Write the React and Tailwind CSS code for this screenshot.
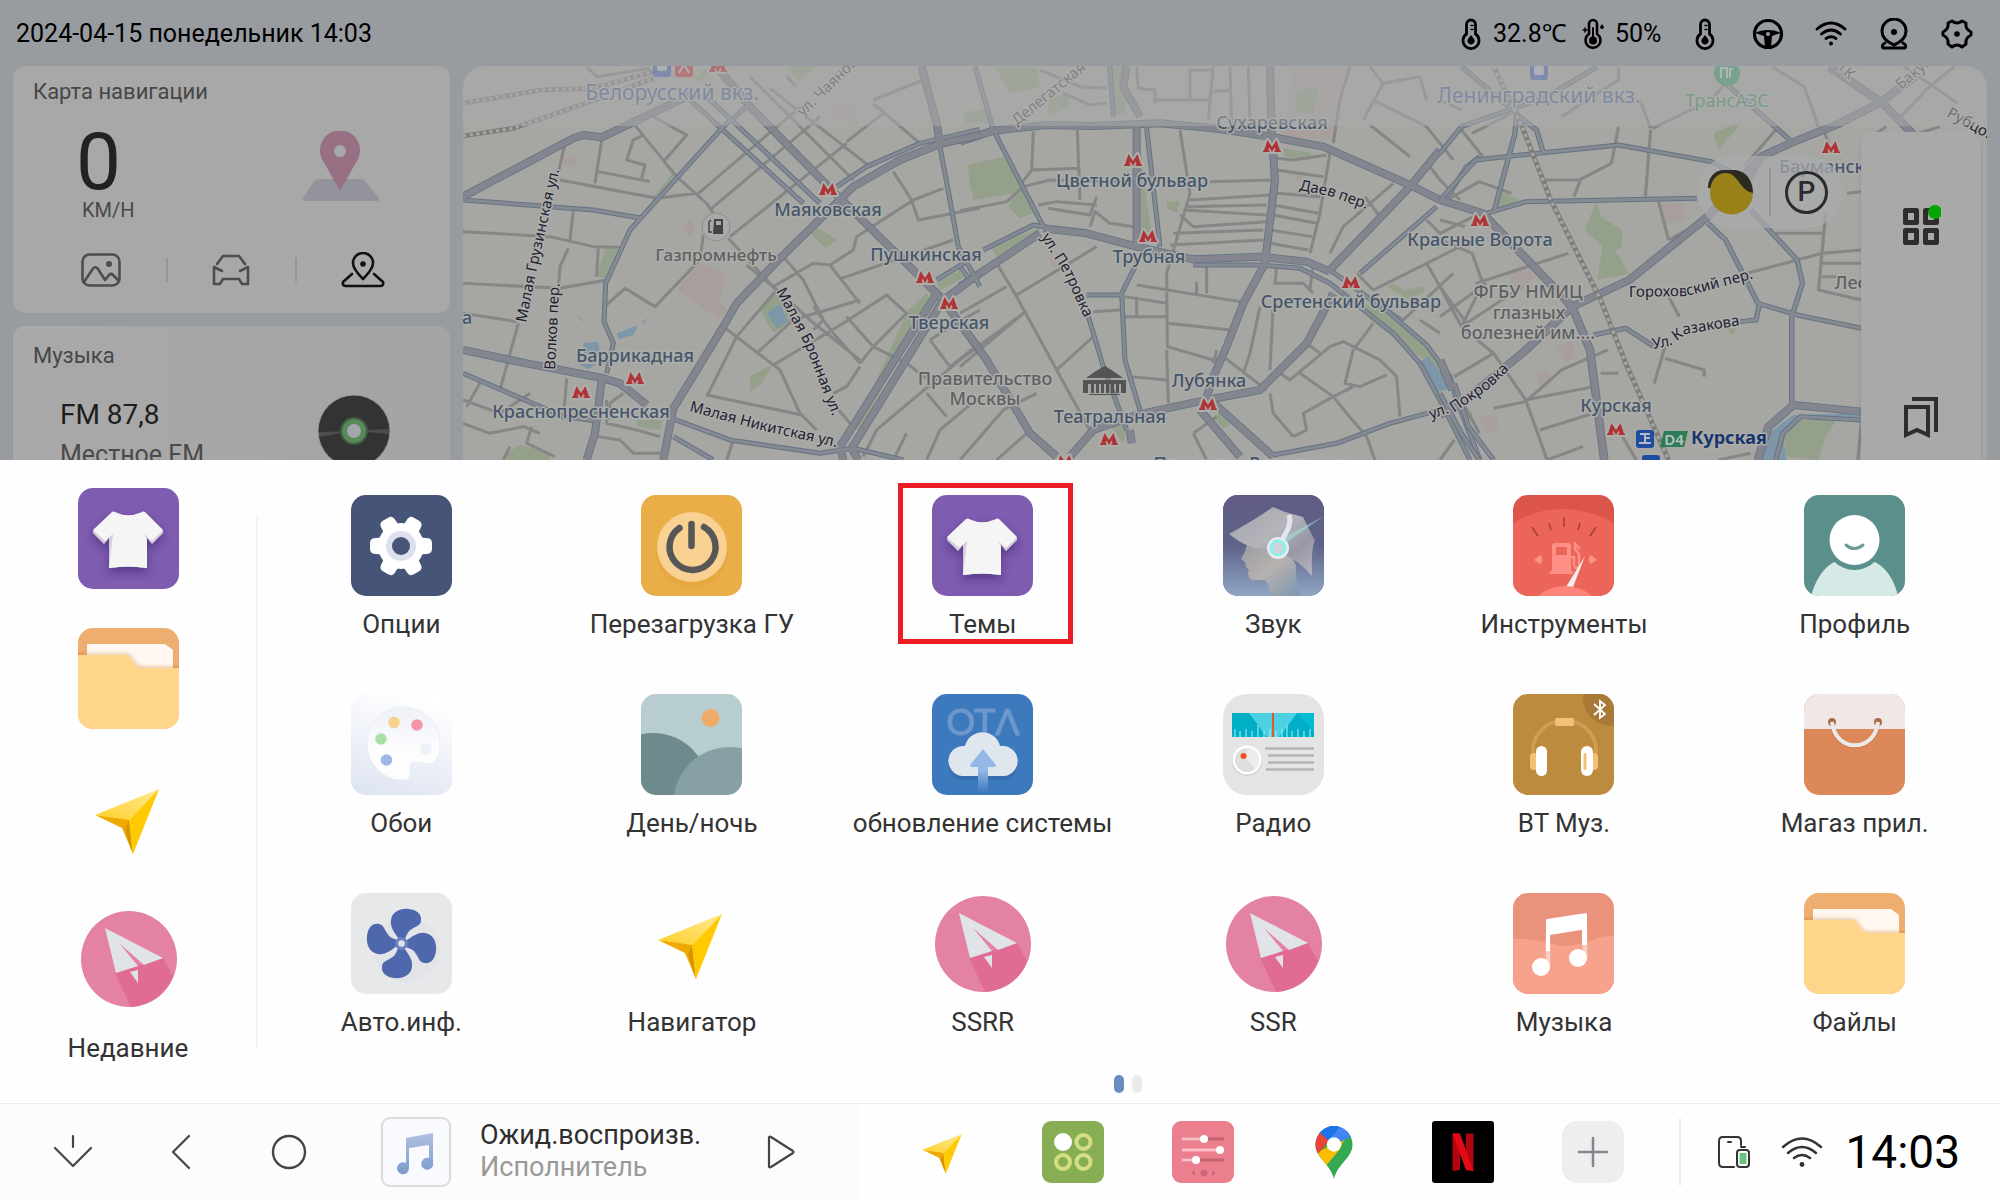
import { useId } from 'react';

/* ---------- app icons, all on a 101 x 101 canvas ---------- */

function Tile({ bg, rx = 15, children }) {
  const id = useId();
  return (
    <svg viewBox="0 0 101 101" className="block h-full w-full" aria-hidden="true">
      <clipPath id={id}>
        <rect width="101" height="101" rx={rx} />
      </clipPath>
      <g clipPath={`url(#${id})`}>
        <rect width="101" height="101" fill={bg} />
        {children}
      </g>
    </svg>
  );
}

function ShirtIcon() {
  const id = useId();
  return (
    <Tile bg="#7e5cb0">
      <filter id={id} x="-30%" y="-30%" width="160%" height="170%">
        <feDropShadow dx="0" dy="5" stdDeviation="5" floodColor="#3b2366" floodOpacity="0.55" />
      </filter>
      <g filter={`url(#${id})`}>
        <path d="M15 43 34 25 50 28 67 25 85 43 85 45 74 56 69 50V80Q50 77 31 80V50L26 56 15 45Z" fill="#d3cddd" />
        <path d="M34 24Q36 23 38 24.500Q50 30 63 24.500Q65 23 67 24L85 42 74 53 66 46 69 52V80Q50 77 31 80L35 46 27 53 15 42Z" fill="#f5f5f6" />
      </g>
    </Tile>
  );
}

function FolderIcon() {
  const id = useId();
  return (
    <Tile bg="#eeae70">
      <filter id={id} x="-10%" y="-30%" width="120%" height="150%">
        <feDropShadow dx="0" dy="-1" stdDeviation="2" floodColor="#b5641c" floodOpacity="0.4" />
      </filter>
      <path d="M9 17Q9 16 10 16H87L95 22V60H9Z" fill="#fff7f0" />
      <path d="M-5 27H49Q51 27 53 30L58 37Q60 40 63 40H106V106H-5Z" fill="#fed58a" filter={`url(#${id})`} />
    </Tile>
  );
}

function ArrowIcon() {
  const id = useId();
  return (
    <svg viewBox="0 0 101 101" className="block h-full w-full" aria-hidden="true">
      <linearGradient id={id} x1="0" y1="1" x2="1" y2="0">
        <stop offset="0" stopColor="#ffd028" />
        <stop offset="1" stopColor="#ffe995" />
      </linearGradient>
      <path d="M17 47 51 51 55 86 44 60Z" fill="#efa900" />
      <path d="M51 51 55 86 51 75 47 62Z" fill="#d99400" />
      <path d="M17 47 81 21 51 52Z" fill={`url(#${id})`} />
      <path d="M81 21 55 86 51 52Z" fill="#ffcb00" />
    </svg>
  );
}

function PlaneIcon() {
  return (
    <svg viewBox="0 0 101 101" className="block h-full w-full" aria-hidden="true">
      <circle cx="51" cy="51" r="48" fill="#e482a3" />
      <path d="M37 65 85 50 95 68A48 48 0 0 1 53 99Z" fill="#e06c93" />
      <path d="M27 20 85 50 66 57 41 35 60 58 38 65Z" fill="#e0e4e8" />
      <path d="M52 64 60 62V75Z" fill="#e0e4e8" />
    </svg>
  );
}

function GearIcon() {
  return (
    <Tile bg="#465478">
      <g fill="#fff">
        <circle cx="50" cy="51" r="23" />
        {[0, 60, 120, 180, 240, 300].map((a) => (
          <path key={a} d="M62 39Q68 43 75 43 81 43 81 48V54Q81 59 75 59 68 59 62 63Z" transform={`rotate(${a} 50 51)`} />
        ))}
      </g>
      <circle cx="50" cy="51" r="15" fill="#dce1ec" />
      <circle cx="50" cy="51" r="9" fill="#465478" />
    </Tile>
  );
}

function PowerIcon() {
  return (
    <Tile bg="#e9ae48">
      <circle cx="51" cy="57" r="36" fill="#e8a33c" opacity="0.6" />
      <circle cx="51" cy="52" r="35" fill="#f9d193" />
      <g fill="none" stroke="#575757" strokeWidth="6.500" strokeLinecap="round">
        <path d="M38.500 33A23 23 0 1 0 63 32" />
        <path d="M50.500 29V51" />
      </g>
    </Tile>
  );
}

function SoundIcon() {
  const id = useId();
  return (
    <Tile bg="#625d85">
      <linearGradient id={id} x1="0" y1="0" x2="0" y2="1">
        <stop offset="0" stopColor="#605b84" />
        <stop offset="0.5" stopColor="#5f6489" />
        <stop offset="1" stopColor="#8fa6c4" />
      </linearGradient>
      <linearGradient id={`${id}c`} x1="0" y1="0" x2="1" y2="1">
        <stop offset="0" stopColor="#a3a3ac" />
        <stop offset="0.45" stopColor="#b4b4bb" />
        <stop offset="0.7" stopColor="#9797a6" />
        <stop offset="1" stopColor="#b9b9c2" />
      </linearGradient>
      <linearGradient id={`${id}f`} x1="0" y1="0" x2="1" y2="1">
        <stop offset="0" stopColor="#9c9ca2" />
        <stop offset="0.5" stopColor="#b5b1ae" />
        <stop offset="1" stopColor="#7d96b4" />
      </linearGradient>
      <rect width="101" height="101" fill={`url(#${id})`} />
      <path d="M24 48 22 57 18 64 22 67 23 72 26 75 25 78Q25 86 34 85L42 85Q47 90 47 101H78Q72 90 73 70L62 50Z" fill={`url(#${id}f)`} />
      <path d="M6 39Q30 26 50 12L62 17 80 22 92 46Q88 52 89 81 76 66 62 60 50 55 37 54 22 52 6 39Z" fill={`url(#${id}c)`} />
      <path d="M58 44 101 21 60 50Z" fill="#9fe8e6" opacity="0.5" />
      <path d="M66 20Q68 26 65 34L58 47" fill="none" stroke="#e4e4ec" strokeWidth="5" />
      <circle cx="55" cy="53" r="11" fill="#e6ebf2" />
      <circle cx="55" cy="53" r="7" fill="#cfd3dd" stroke="#8ff0ea" strokeWidth="3" />
    </Tile>
  );
}

function GaugeIcon() {
  return (
    <Tile bg="#db5549">
      <circle cx="50" cy="110" r="96" fill="#eb6559" />
      <g stroke="#a93f37" strokeWidth="1.600">
        <path d="M51 22V32M36 28 38 35M67 28 65 35M19 32 25 41M83 32 77 41" />
      </g>
      <g fill="#ff9088">
        <path d="M21 65 27 60 29 62V67L27 69ZM84 65 78 60 76 62V67L78 69Z" />
        <path d="M39 51Q39 48 42 48H55Q58 48 58 51V76H60V79H37V76H39ZM43 52V60H54V52Z" fillRule="evenodd" />
      </g>
      <path d="M58 62H61V71Q63 75 66 71V59L62 54 62 49 67 54" fill="none" stroke="#ff9088" strokeWidth="2.500" />
      <path d="M72 61 53 92 60 92Z" fill="#f5eeee" />
      <circle cx="52" cy="132" r="41" fill="#ff857a" />
    </Tile>
  );
}

function ProfileIcon() {
  return (
    <Tile bg="#5a8f8c">
      <path d="M7 101Q14 76 30 67H71Q88 76 94 101Z" fill="#d5e9e7" />
      <circle cx="50.500" cy="46" r="29" fill="#5a8f8c" />
      <circle cx="50.500" cy="45" r="25" fill="#fff" />
      <path d="M42 50Q50 57 59 50" fill="none" stroke="#6b9a97" strokeWidth="3" strokeLinecap="round" />
    </Tile>
  );
}

function PaletteIcon() {
  const id = useId();
  return (
    <Tile bg="#eef1f9">
      <linearGradient id={id} x1="0.6" y1="0" x2="0.3" y2="1">
        <stop offset="0" stopColor="#ffffff" />
        <stop offset="1" stopColor="#dfe5f2" />
      </linearGradient>
      <linearGradient id={`${id}p`} x1="0" y1="0" x2="0" y2="1">
        <stop offset="0" stopColor="#eff1f8" />
        <stop offset="0.6" stopColor="#fdfdfe" />
      </linearGradient>
      <rect width="101" height="101" fill={`url(#${id})`} />
      <path
        d="M52 13C74 13 89 30 89 50 89 60 86 66 82 69 76 71 70 68 63 68 59 68 59 71 59 75V80C59 84 57 86 51 86 31 86 16 69 16 49 16 29 32 13 52 13Z"
        fill={`url(#${id}p)`}
        stroke="#e6eaf3"
        strokeWidth="0.600"
      />
      <circle cx="43" cy="28.500" r="5.800" fill="#f5d28b" />
      <circle cx="66" cy="31" r="5.800" fill="#f794a8" />
      <circle cx="30" cy="45" r="5.800" fill="#abe0a5" />
      <circle cx="35.500" cy="66" r="5.800" fill="#9fb8e8" />
      <circle cx="75" cy="55" r="5.800" fill="#eef1f9" />
    </Tile>
  );
}

function DayNightIcon() {
  return (
    <Tile bg="#b7cdd0">
      <circle cx="69.500" cy="24" r="9" fill="#f0ab68" />
      <circle cx="12" cy="95" r="56" fill="#6e8a8c" />
      <circle cx="89" cy="110" r="57" fill="#86a0a4" />
    </Tile>
  );
}

function OtaIcon() {
  const id = useId();
  return (
    <Tile bg="#3d79bd">
      <linearGradient id={id} x1="0" y1="0" x2="0" y2="1">
        <stop offset="0.5" stopColor="#93b8e7" />
        <stop offset="1" stopColor="#3d79bd" />
      </linearGradient>
      <text x="51" y="41" textAnchor="middle" fontFamily="Lato, sans-serif" fontSize="36" fill="#6e97cc" stroke="#6e97cc">OTΛ</text>
      <path d="M30 82A15 15 0 1 1 33 52A18 18 0 0 1 68 52A15 15 0 1 1 73 82Z" fill="#2d5e98" opacity="0.35" transform="translate(0 4)" />
      <path d="M30 82A15 15 0 1 1 33 52A18 18 0 0 1 68 52A15 15 0 1 1 73 82Z" fill="#dfe6ee" />
      <path d="M51 55 64 71Q64 73 62 73H56V98H46V73H40Q38 73 38 71Z" fill={`url(#${id})`} />
    </Tile>
  );
}

function RadioIcon() {
  return (
    <Tile bg="#e4e4e4" rx={24}>
      <rect x="9" y="19" width="82" height="24" fill="#00bcd4" />
      <path d="M9 19H45L30 43H9ZM9 38 26 19 42 43H9ZM58 43 74 19 91 38V43Z" fill="#00a9c0" opacity="0.7" />
      <path d="M26 19H74L56 43H44Z" fill="#4dd0e1" />
      <path d="M12 35V43M17 37V43M23 35V43M29 37V43M35 31V43M41 37V43M47 35V43M53 37V43M59 35V43M64 31V43M69 37V43M75 35V43M81 37V43M87 35V43" stroke="#b2ebf2" />
      <rect x="49" y="19" width="2" height="24" fill="#e8562a" />
      <circle cx="24" cy="67" r="15" fill="#cfcfcf" />
      <circle cx="24" cy="66" r="14.500" fill="#fff" />
      <circle cx="24" cy="66" r="12" fill="#dedede" />
      <path d="M24 66 32 75A12 12 0 0 0 24 54Z" fill="#ececec" />
      <circle cx="20.500" cy="62" r="3" fill="#f4511e" />
      <path d="M42 54.500H91M45 61.500H91M45 68.500H91M43 75.500H91" stroke="#b4b4b4" strokeWidth="2.600" />
    </Tile>
  );
}

function BluetoothIcon() {
  return (
    <Tile bg="#bd8b3e">
      <circle cx="98" cy="4" r="28" fill="#a97a37" />
      <path d="M81 10 92 20 87 24V7L92 11 81 21" fill="none" stroke="#fff" strokeWidth="1.800" />
      <path d="M20 61V56A31 29 0 0 1 83 56V61" fill="none" stroke="#d19d52" strokeWidth="3.600" />
      <rect x="42" y="24" width="19" height="8" rx="1.500" fill="#f4bf77" />
      <rect x="17" y="59" width="12" height="17" rx="4" fill="#f4bf77" />
      <rect x="74" y="59" width="11" height="17" rx="4" fill="#f4bf77" />
      <rect x="23" y="52" width="11" height="30" rx="5.500" fill="#fff" />
      <rect x="68" y="52" width="12" height="30" rx="6" fill="#fff" />
      <rect x="70.500" y="59" width="3" height="17" rx="1.500" fill="#f4bf77" />
    </Tile>
  );
}

function ShopIcon() {
  return (
    <Tile bg="#dc8858">
      <rect width="101" height="35" fill="#efe8e4" />
      <circle cx="28" cy="28" r="4" fill="#b06a48" />
      <circle cx="74" cy="28" r="4" fill="#b06a48" />
      <path d="M28 30C31 60 71 60 74 30" fill="none" stroke="#b9683d" strokeWidth="4" opacity="0.4" />
      <path d="M28 28C31 59 71 59 74 28" fill="none" stroke="#eae9ec" strokeWidth="4" />
    </Tile>
  );
}

function FanIcon() {
  return (
    <Tile bg="#e7e8ea">
      <ellipse cx="56" cy="57" rx="33" ry="32" fill="#dfe0e3" opacity="0.5" />
      {[0, 90, 180, 270].map((a) => (
        <path
          key={a}
          d="M48 46C42 38 39 33 40 27 41 19 49 15 58 16 66 17 71 21 70 28 69 33 65 33 61 36 57 38 56 41 54 46Z"
          fill="#4f67ac"
          transform={`rotate(${a} 50.500 50.500)`}
        />
      ))}
      <circle cx="50.500" cy="50.500" r="6.500" fill="#6c80c0" />
      <circle cx="50.500" cy="50.500" r="3.300" fill="#dfe3ee" />
    </Tile>
  );
}

function MusicIcon() {
  return (
    <Tile bg="#eb927c">
      <path d="M0 46C22 44 34 52 54 53 74 52 80 43 101 43V101H0Z" fill="#f7a28c" />
      <path d="M35 40V74M72 34V65" stroke="#fbd0c4" strokeWidth="4.500" />
      <path d="M33 27Q33 26 34 26L73 20 74 21V36L37 42V58H33ZM69 36H74V52H69Z" fill="#fff" />
      <circle cx="28" cy="74" r="9" fill="#fff" />
      <circle cx="65" cy="65" r="9" fill="#fff" />
    </Tile>
  );
}

/* ---------- dock icons, 62 x 62 canvas ---------- */

function CirclesIcon() {
  return (
    <svg viewBox="0 0 62 62" className="block h-full w-full" aria-hidden="true">
      <rect width="62" height="62" rx="9" fill="#88ae55" />
      <circle cx="21" cy="21" r="9" fill="#fff" />
      <g fill="none" stroke="#d3df81" strokeWidth="4">
        <circle cx="41.500" cy="21" r="7" />
        <circle cx="21" cy="41" r="7" />
        <circle cx="41.500" cy="41" r="7" />
      </g>
    </svg>
  );
}

function SlidersIcon() {
  return (
    <svg viewBox="0 0 62 62" className="block h-full w-full" aria-hidden="true">
      <rect width="62" height="62" rx="9" fill="#eb7f8d" />
      <path d="M10 18H52M10 39H52" stroke="#c56471" strokeWidth="3" />
      <path d="M10 18H32M10 29H48M10 39H24" stroke="#fbbfca" strokeWidth="3" />
      <g fill="#fff">
        <circle cx="32" cy="18" r="4" />
        <circle cx="48" cy="29" r="4" />
        <circle cx="24" cy="39" r="4" />
      </g>
      <g fill="#cb6875">
        <circle cx="32" cy="52" r="3.500" />
        <path d="M23 49V55L19 52ZM40 49V55L44 52Z" />
      </g>
    </svg>
  );
}

function MapsPinIcon() {
  const id = useId();
  return (
    <svg viewBox="0 0 62 62" className="block h-full w-full" aria-hidden="true">
      <clipPath id={id}>
        <path d="M32 5A18.500 18.500 0 0 1 50.500 23.500C50.500 37 36 42 32 58 28 42 13.500 37 13.500 23.500A18.500 18.500 0 0 1 32 5Z" />
      </clipPath>
      <g clipPath={`url(#${id})`}>
        <rect width="62" height="62" fill="#34a853" />
        <path d="M0 50 16 31 31 23 46 10 38 28 18 52Z" fill="#fbbc04" />
        <path d="M0 0H62V10L31 24 16 12Z" fill="#4285f4" />
        <path d="M10 0H37L37 7 26 20 16 12Z" fill="#1a73e8" />
        <path d="M0 16 17 11 27 20 15 34 0 40Z" fill="#ea4335" />
        <path d="M37 6 62 6 46 13 38 22Z" fill="#4285f4" />
      </g>
      <circle cx="32" cy="23.500" r="7.200" fill="#fff" />
    </svg>
  );
}

function NetflixIcon() {
  return (
    <svg viewBox="0 0 62 62" className="block h-full w-full" aria-hidden="true">
      <rect width="62" height="62" rx="3" fill="#000" />
      <path d="M20.500 12.500H28V49L20.500 50ZM34 12.500H41.500V50L34 49Z" fill="#b1060f" />
      <path d="M20.500 12.500H28L41.500 50 34 49Z" fill="#e50914" />
    </svg>
  );
}

function AddIcon() {
  return (
    <svg viewBox="0 0 62 62" className="block h-full w-full" aria-hidden="true">
      <rect width="62" height="62" rx="15" fill="#eee" />
      <path d="M31 17V45M17 31H45" stroke="#85858f" strokeWidth="2.500" strokeLinecap="round" />
    </svg>
  );
}

/* ---------- line icons ---------- */

function Line({ box = '0 0 32 32', w = 3, className, children }) {
  return (
    <svg viewBox={box} className={className} fill="none" stroke="currentColor" strokeWidth={w} strokeLinecap="round" strokeLinejoin="round" aria-hidden="true">
      {children}
    </svg>
  );
}

function ThermoIcon() {
  return (
    <Line w={2.8} className="h-8 w-8">
      <path d="M11.500 16V6.500A4.500 4.500 0 0 1 20.500 6.500V16A8 8 0 1 1 11.500 16Z" />
      <path d="M16 17 19 21A3.500 3.500 0 1 1 13 21Z" fill="currentColor" stroke="none" />
      <path d="M16 7.500H18M16 11.500H18" strokeWidth="1.500" />
    </Line>
  );
}

function HumidityIcon() {
  return (
    <Line w={2.6} className="h-8 w-8">
      <path d="M12 16V6A4 4 0 0 1 20 6V16A7.500 7.500 0 1 1 12 16Z" />
      <circle cx="16" cy="22.500" r="4" fill="currentColor" stroke="none" />
      <path d="M16 10V22" strokeWidth="2" />
      <path d="M25 6 27 9A2 2 0 1 1 23 9Z" fill="currentColor" stroke="none" />
      <path d="M8 10V14M6 12H10" strokeWidth="1.500" />
    </Line>
  );
}

function WheelIcon() {
  return (
    <Line w={3.2} className="h-8 w-8">
      <circle cx="16" cy="16" r="13.500" />
      <path d="M3 15C10 11 22 11 29 15L20 18 19 29H13L12 18Z" fill="currentColor" stroke="none" />
      <circle cx="16" cy="16" r="2" fill="#989ba0" stroke="none" />
    </Line>
  );
}

function WifiIcon() {
  return (
    <Line w={2.8} className="h-8 w-8">
      <path d="M2 11Q16 -1 30 11M6.500 16Q16 8 25.500 16M11 20.500Q16 17 21 20.500" />
      <circle cx="16" cy="25.500" r="2" fill="currentColor" stroke="none" />
    </Line>
  );
}

function PlaceIcon() {
  return (
    <Line w={3} className="h-8 w-8">
      <path d="M16 27C9 24 4 19 4 13A12 12 0 0 1 28 13C28 19 23 24 16 27Z" />
      <circle cx="16" cy="14" r="3" fill="currentColor" stroke="none" />
      <path d="M7 25Q3 27 5 30H27Q29 27 25 25" />
    </Line>
  );
}

function HexGearIcon() {
  return (
    <Line w={3} className="h-8 w-8">
      <path d="M11 3Q16 7 21 3L25 5Q24 11 30 14V17Q24 20 25 26L21 29Q16 25 11 29L7 26Q8 20 2 17V14Q8 11 7 5Z" />
      <circle cx="16" cy="16" r="2.800" fill="currentColor" stroke="none" />
    </Line>
  );
}

/* ---------- map ---------- */

// Roads are stored per tile, in tile units (3 per pixel).
const WEST = {
  parks: 'M600 480 650 535 600 590 580 590 635 525ZM1050 695 1070 680 1130 720 1095 745ZM435 748 475 745 440 835 412 830ZM900 930 945 870 1000 960 940 1000ZM1200 540 1430 425 1420 440 1180 550ZM1525 500 1560 490V570L1530 560ZM870 1130 940 1090 905 1150 870 1175ZM1430 850 1500 810 1515 830 1440 870ZM1345 930 1400 880 1410 895 1200 1290 1180 1290ZM140 1360 180 1335 270 1360V1380H140ZM530 1260 605 1260 600 1290 530 1280ZM700 235 740 205 760 210 720 245ZM980 198H1070L1015 245Z',
  pink: 'M650 870 720 790 800 825 780 900 800 935 775 955ZM310 475 348 470V500H310ZM665 680 690 655 705 680 690 710ZM1100 330 1180 300 1200 385 1130 350Z',
  water: 'M920 940 960 912 985 965 950 985ZM470 1000 535 975 520 1005 475 1018ZM350 945 378 970 355 955ZM545 965 565 955 550 972ZM370 1030 415 1025 420 1060 370 1060ZM355 1092H410L385 1108Z',
  minor:
    'M300 540 590 595 710 580M315 430 290 540M425 420 405 550M415 515 570 545M520 370 650 530 740 610 760 640M570 345 680 405 615 480M550 405 520 420 500 480 555 495 545 535M710 585 980 355 1040 310M755 625 1040 385 1080 350M810 710 1160 430M1160 425 1270 340M930 265 1230 500M870 230 1180 540M9 695 270 710 400 740 480 742M9 850 300 865 440 840M340 630 330 720M325 745 300 800 295 865M415 740 410 830M440 915 495 865 585 920 720 780M730 705 720 780M805 715 930 850 1050 960 1200 1080M970 770 1030 840 1090 960 1060 990M860 795 950 870 890 940 830 1010 740 1190M940 860 1060 790 1110 795 1200 910M1110 795 1180 750 1190 710 1360 600 1450 565M1300 515 1355 600 1375 660 1560 625M1145 835 1480 720M790 980 960 1110 1020 1240 1070 1290M740 1185 1025 1245M940 1095 1150 970 1280 885 1340 940 1240 1040 1200 1090M890 1060 1000 960 1200 900M1160 950 1240 1040 1340 1090 1430 1160M1060 920 1120 1000 1200 1090M1120 1180 1160 1160 1200 1100M1120 1210 1170 1270M175 970 120 1170M9 940 170 965M60 1150 20 1220M320 1135 310 1260M9 1200 120 1240 210 1180M9 1270 90 1300 190 1280 240 1300M215 1280 200 1330 285 1370M440 1200 440 1270 530 1290 600 1310M415 1310 480 1320 520 1360 600 1360M490 1180 450 1210 445 1260M1410 1020 1470 1100 1560 1030M1400 1180 1460 1250M1500 1080 1250 1290 1210 1370M1340 1300 1300 1380M1560 1190 1440 1290 1400 1380M380 200 410 230 570 205M1240 300 1390 240M1240 310 1380 430M980 230 1010 260M1560 930 1470 980 1410 1020M130 1380 150 1340M820 1320 800 1380',
  medium:
    'M9 600 400 630 545 655M690 300 1030 610M740 290 1080 610M440 1120 460 1030 432 965 437 850 510 690 600 590 790 380 860 320M1440 440 1470 600 1495 740M9 1120 310 1250 400 1262M635 1255 810 1320 1080 1360 1180 1345 1330 1380M640 1310 760 1380M1130 560 1220 500 1380 430 1560 388M1495 740 1560 860M1430 840 1560 760',
  major:
    'M9 590 340 415 370 405 425 412 690 285M770 200 870 320 1110 565 1390 840 1440 890 1560 1050M610 1380 640 1225 790 980 830 910 960 775 1180 560 1320 480 1440 432 1560 405M9 1050 200 1090 430 1135 480 1150 560 1215M380 1380 405 1300 425 1140M1385 200 1430 370 1440 430M1140 1340 1430 880M1175 1345 1450 900 1560 820M1140 1340 1150 1380M1175 1345 1195 1380',
  rail: 'M9 310 240 270 400 265 580 215M9 408 160 385 320 330 580 235',
};

const CENTRE = {
  parks: 'M22 495 130 470 190 560 220 640 180 655 145 620 165 580 40 600ZM440 200 500 200 495 340 460 345ZM540 430 560 600 580 725H545ZM620 605 660 603 650 640 620 625ZM95 745 230 685 240 690 110 770ZM970 445 1055 460 1045 480 975 470ZM925 775 1000 780 1080 800 950 790ZM1280 860 1300 850 1330 870 1390 860 1395 875 1350 900ZM1190 900 1260 930 1420 1050 1460 1120 1380 1070 1230 960ZM760 1250 790 1235 820 1270 790 1285ZM430 1235 500 1290 490 1330 460 1290ZM105 200 230 205 240 260 150 280ZM1010 270 1075 265 1060 345 1005 335ZM10 340 90 320V370H20ZM260 300 320 280 330 320 270 345Z',
  pink: 'M1000 200H1160L1120 420 970 410ZM265 775 290 770 310 800 280 800ZM980 520 1040 510 1030 545Z',
  water: 'M1380 1085 1405 1070 1460 1140 1460 1170 1435 1175Z',
  minor:
    'M220 395 215 510 360 505M352 390 360 600M215 510 185 550M190 560 270 540 520 545M0 632 140 605 190 560M660 390 690 580 620 820 622 1040 760 1080M235 615 290 605 410 615M265 625 390 645 410 590M390 680 405 635 450 670 520 680M690 600 930 585M680 620 920 615M660 645 700 680 920 665M640 700 910 690M630 735 910 720M670 630 920 645M750 545 935 540M950 475 1000 480 1100 465M950 510 1090 530M950 580 1080 590M940 615 1075 640M940 645 1070 670M930 690 1055 710M930 730 1045 750M1110 460 1080 640 1050 760M1230 375 1350 470M1110 760 1150 680 1300 550M1215 590 1260 650M740 790V880M530 855 840 905M710 845V880M625 970 810 990M495 890 620 910M495 950H620M530 890V950M400 935 480 930M950 800 945 850 1030 850 1060 880M620 1050 625 1210M510 1130 620 1140M1060 790 1050 870M900 920 870 1060 850 1120M940 910 930 1110M760 1080 790 1070 920 1170M770 1050 760 1090M1040 1030 1080 1060M110 790 170 890 290 1110 400 1310M170 885 410 740M0 940 140 860M0 1080 190 940 0 1100M290 1110 400 1010M960 1120 990 1140 1110 1040 1150 1025 1260 1080 1310 1130 1320 1250M1020 1120 1120 1190 1160 1240 1220 1310 1245 1380M1240 970 1180 1050 1155 1150 1200 1160 1280 1125M1120 1190 1030 1240 1040 1290 1000 1310M0 1380 130 1230 230 1180M110 1380 200 1300M930 1180 940 1240 1000 1310M700 1300 740 1380M700 1300 770 1250M1180 1160 1120 1190M1240 870 1400 790 1540 720M1240 900 1330 960 1480 820M1400 790 1440 860 1520 970M1240 870 1190 820M1380 960 1440 1000M1410 500 1440 540 1500 600M1400 660 1440 700 1560 640M530 200 535 265 585 270V310M690 300V210H760M585 300 750 300M760 200 745 360M810 200 815 370M865 200 870 370M760 275 810 270M240 210 360 260 440 265M310 280 390 315 440 310M1170 200 1140 300 1120 430M1210 360 1270 250 1380 230M1380 230 1400 300M1230 200 1270 250M1240 300 1400 380 1480 480',
  medium:
    'M45 200 100 390 250 680M540 770 485 880 495 1080 540 1230M380 885 485 885M385 950 430 1100 500 1290M1200 820 1430 620M1450 610 1520 500 1560 470M560 385 600 740M70 750 220 675 250 680M0 800 30 840M940 1365 1130 1330 1290 1270 1440 1230M450 200 460 350M1110 810 1290 940 1400 1035 1470 1130 1490 1200 1560 1380M700 795 900 795 1020 805 1110 850 1300 1000 1380 1090 1440 1200 1530 1380',
  major:
    'M0 425 100 392 260 375 400 378 600 370 760 385 930 410 1090 440 1350 555 1440 600M530 380V740M930 200 935 400 945 540 915 790 850 910 800 1040 760 1130 740 1190M1350 560 1110 810M1350 560 1440 450M250 685 380 700 530 740 700 778 900 770 1040 785 1110 815M0 860 240 700M0 970 80 1080 210 1300 290 1370M330 1370 400 1290 530 1245 740 1200 900 1170 1040 1030 1120 880M740 1190 940 1370M720 1230 840 1370M500 200 490 260 540 350M510 1290 515 1330',
  rail: '',
};

const EAST = {
  parks: 'M440 600 450 650 510 690V740L490 750 530 820 440 840 455 740 405 690ZM160 570 225 600 155 630ZM765 400 850 360 780 450ZM960 1290 990 1262 1110 1260 1080 1310 1060 1380 970 1370ZM800 985 830 985 820 1005ZM65 1240 90 1235V1260L65 1255Z',
  pink: 'M180 820 230 795 270 830 220 865ZM610 615 680 610 690 660 620 670ZM325 1040 370 1020 380 1070 350 1090ZM110 1250 160 1240V1290L130 1300ZM270 1120 300 1110 310 1150 280 1160Z',
  water: 'M0 1110 20 1140 0 1165ZM900 1380 920 1300 990 1245 1180 1240 1180 1250 1010 1255 960 1310 970 1380Z',
  minor:
    'M90 400 200 340M60 390 120 470M20 600 110 545 200 580M280 540 390 540 480 490 500 380M395 535 375 590M590 390 575 590M595 385 760 300 800 250M500 200V240L340 350M610 595 640 720M590 385 560 300M860 820 1070 760 1180 750M1080 640 1060 870 1180 900M1070 790H1180M1070 830H1140M640 890 670 950M630 1040 600 1150M630 1075 740 1110V1130M900 480 870 540M940 390 850 500M1070 380 1100 460M100 850 360 760M0 720 90 760 120 850 60 980M0 860 60 980 230 860M130 850 0 950M60 980 150 1060 40 1130M150 1060 240 1200 300 1380M240 1200 430 1160M150 1225 240 1205 340 1110 470 1050M450 1120H500M60 1200 110 1300M280 1290 430 1240M500 1290 550 1380M1180 1270 1170 1380M780 1380 870 1360M1300 200 1450 310M1370 260 1290 350M1440 200 1360 270M930 200 1020 260 1060 380M1250 380 1180 430M1340 400 1400 380M0 1380 40 1320M300 1380 400 1340M640 720 760 650M1080 700 940 700M1140 580 1180 575M0 660 70 680M0 300 60 330',
  medium:
    'M0 460 60 380 300 290 440 200M0 600 100 480 200 468 500 435 760 485 840 530M130 640 240 605 720 595M750 670 800 720 890 910 1000 945 1180 985M870 630 1000 780 1015 850 985 950V1210M800 250 980 420M840 965 885 960 895 910M600 1040 520 985 430 1005M210 340 270 390 290 460M940 1380 960 1300 1010 1250 1180 1260M0 1180 60 1300 110 1380M40 1150 80 1280 150 1380M60 200 215 340 210 400 150 640',
  major:
    'M0 600 120 640 370 920 420 1050 460 1380M370 920 530 840 750 650 900 470 980 430 1120 370 1230 310 1330 230M370 920 230 1060 60 1210 0 1245M890 1380 920 1280 990 1215 1180 1235M1090 200 1240 310 1340 420M0 1080 35 1170',
  rail: 'M150 200 230 380 310 600 450 900 520 1090 640 1380',
};

const METRO = [
  [828, 189], [925, 277], [949, 303], [635, 378], [581, 392], [1133, 160], [1148, 236], [1272, 146],
  [1351, 282], [1480, 220], [1208, 404], [1109, 439], [1616, 429], [1831, 147], [718, 66], [1065, 461],
];

const STATIONS = [
  ['Маяковская', 828, 216], ['Пушкинская', 926, 261], ['Тверская', 949, 329], ['Баррикадная', 635, 362],
  ['Краснопресненская', 581, 418], ['Театральная', 1110, 423], ['Лубянка', 1209, 387], ['Трубная', 1149, 263],
  ['Цветной бульвар', 1132, 187], ['Сухаревская', 1272, 129], ['Сретенский бульвар', 1351, 308],
  ['Красные Ворота', 1480, 246], ['Курская', 1616, 412], ['Бауманская', 1832, 173], ['а', 467, 324],
  ['Площадь', 1195, 470], ['Революции', 1300, 470],
];

const PLACES = [
  ['Правительство', 985, 385], ['Москвы', 985, 405], ['ФГБУ НМИЦ', 1528, 298],
  ['глазных', 1529, 319], ['болезней им....', 1528, 339], ['Лефортово', 1884, 289],
];

const STREETS = [
  ['Малая Грузинская ул.', 'M526 323 538 264 561 162'],
  ['Волков пер.', 'M555 370 560 270'],
  ['Малая Бронная ул.', 'M776 291 805 345 834 420'],
  ['Малая Никитская ул.', 'M689 411 760 430 850 450'],
  ['ул. Петровка', 'M1041 237 1065 275 1094 340'],
  ['Даев пер.', 'M1299 190 1330 196 1380 214'],
  ['ул. Покровка', 'M1431 419 1458 410 1490 388 1530 350'],
  ['Гороховский пер.', 'M1629 297 1687 296 1770 274'],
  ['Ул. Казакова', 'M1653 349 1670 346 1686 334 1760 322'],
  ['Рубцовская', 'M1946 116 2030 162'],
];

const FADED_STREETS = [
  ['ул. Чаянова', 'M803 117 870 52'],
  ['Делегатская', 'M1017 126 1100 58'],
  ['ТТК', 'M1830 62 1900 128'],
  ['Бакунинская', 'M1901 90 1960 40'],
];

function MapTile({ tile, transform }) {
  return (
    <g transform={transform} fill="none" strokeLinejoin="round">
      <path d={tile.pink} fill="#a89f9d" />
      <path d={tile.parks} fill="#94a08a" />
      <path d={tile.water} fill="#7d97a8" />
      <path d={tile.minor} stroke="#868686" strokeWidth="9" />
      <path d={tile.medium} stroke="#657384" strokeWidth="15" />
      <path d={tile.major} stroke="#657384" strokeWidth="24" />
      <path d={tile.medium} stroke="#868a93" strokeWidth="9" />
      <path d={tile.major} stroke="#83868f" strokeWidth="19" />
      <path d={tile.rail} stroke="#7c7c7c" strokeWidth="14" />
      <path d={tile.rail} stroke="#a5a5a2" strokeWidth="9" strokeDasharray="10 10" />
    </g>
  );
}

function StreetLabels({ items, prefix, fill }) {
  return items.map(([name, d], i) => (
    <g key={name}>
      <path id={`${prefix}${i}`} d={d} fill="none" stroke="none" />
      <text fontSize="15" fill={fill}>
        <textPath href={`#${prefix}${i}`}>{name}</textPath>
      </text>
    </g>
  ));
}

function CityMap() {
  return (
    <svg
      viewBox="463 66 1524 394"
      preserveAspectRatio="xMinYMin slice"
      className="block h-full w-full"
      fontFamily="'Noto Sans', 'Open Sans', sans-serif"
      role="img"
      aria-label="Карта"
    >
      <rect x="463" y="66" width="1524" height="394" fill="#a6a7a2" />
      <MapTile tile={CENTRE} transform="translate(960 0) scale(0.3333)" />
      <MapTile tile={WEST} transform="translate(460 0) scale(0.3333)" />
      <MapTile tile={EAST} transform="translate(1440 0) scale(0.3571 0.3333)" />

      <g stroke="#adadaa" strokeWidth="3" paintOrder="stroke" strokeLinejoin="round">
        <g fill="#b03436" strokeWidth="4">
          {METRO.map(([x, y]) => (
            <path key={`${x}-${y}`} d="M-9 6V4.500H-8L-4.500 -6 0 1 4.500 -6 8 4.500H9V6H2.500V4.500H3.500L2.800 1.500 0 6 -2.800 1.500 -3.500 4.500H-2.500V6Z" transform={`translate(${x} ${y})`} />
          ))}
        </g>
        <g fill="#45566b" fontSize="18" fontWeight="500" textAnchor="middle">
          {STATIONS.map(([name, x, y]) => (
            <text key={`${name}${x}`} x={x} y={y}>{name}</text>
          ))}
        </g>
        <g fill="#5f6062" fontSize="18" fontWeight="500" textAnchor="middle">
          {PLACES.map(([name, x, y]) => (
            <text key={name} x={x} y={y}>{name}</text>
          ))}
          <text x="716" y="261" fontSize="17">Газпромнефть</text>
        </g>
        <StreetLabels items={STREETS} prefix="street" fill="#1e2132" />
        <StreetLabels items={FADED_STREETS} prefix="faded" fill="#4d4e55" />
        <g textAnchor="middle">
          <text x="672" y="100" fontSize="21" fill="#4d6494">Белорусский вкз.</text>
          <text x="1539" y="103" fontSize="21" fill="#4d6494">Ленинградский вкз.</text>
          <text x="1727" y="107" fontSize="18" fill="#3e8763">ТрансАЗС</text>
          <text x="1729" y="444" fontSize="18" fontWeight="700" fill="#17366c">Курская</text>
        </g>
      </g>

      {/* fuel station */}
      <circle cx="716" cy="227" r="14" fill="#a9a9a9" stroke="#8e8e8e" />
      <path d="M714 219H723V234H713ZM716 221V225H721V221Z" fill="#444" fillRule="evenodd" />
      <path d="M711 220 709 222V232H712" fill="none" stroke="#444" strokeWidth="1.500" />

      {/* theatre */}
      <g fill="#545454">
        <path d="M1086 378 1096 371H1113L1123 378ZM1096 371 1105 366 1113 371ZM1083 380H1126V384H1083Z" />
        <path d="M1083 384H1088V393H1083ZM1121 384H1126V393H1121ZM1091 384H1094V393H1091ZM1096 384H1099V393H1096ZM1101 384H1104V393H1101ZM1106 384H1109V393H1106ZM1111 384H1114V393H1111ZM1116 384H1119V393H1116ZM1089 394H1120V395H1089Z" />
      </g>

      {/* transit badges */}
      <rect x="653" y="60" width="18" height="17" rx="3" fill="#4a67b3" />
      <rect x="657" y="64" width="10" height="7" rx="2" fill="#b6b8c0" />
      <rect x="675" y="60" width="18" height="17" rx="3" fill="#ba3e3e" />
      <path d="M679 73 684 64 689 73" fill="none" stroke="#b6b8c0" strokeWidth="2" />
      <rect x="1530" y="62" width="18" height="18" rx="3" fill="#4a67b3" />
      <rect x="1534" y="66" width="10" height="9" rx="2" fill="#b6b8c0" />
      <circle cx="1727" cy="73" r="13" fill="#3f9a6a" />
      <path d="M1721 78V68H1727V78M1730 78V69H1733" fill="none" stroke="#b6c4bc" strokeWidth="2" />
      <rect x="1636" y="430" width="18" height="18" rx="3" fill="#1f4ba0" />
      <path d="M1640 434H1650M1645 434V442M1639 443H1651M1645 438H1650" stroke="#b3b9c6" strokeWidth="2" fill="none" />
      <rect x="1642" y="455" width="18" height="10" rx="3" fill="#1f4ba0" />
      <path d="M1664 431H1688L1684 447H1660Z" fill="#2b7c57" />
      <text x="1674" y="445" fontSize="15" fontWeight="600" textAnchor="middle" fill="#bcc4c0">D4</text>

      <rect x="463" y="66" width="1524" height="60" fill="#aaaaaa" opacity="0.55" />
    </svg>
  );
}

/* ---------- dimmed home screen ---------- */

function StatusBar() {
  return (
    <header className="flex h-[66px] shrink-0 items-center justify-between pt-0.5 pr-[27px] pl-4 text-[25px] leading-8 text-black">
      <time>2024-04-15 понедельник 14:03</time>
      <div className="flex items-center">
        <ThermoIcon />
        <span className="ml-1.5 w-[84px]">32.8℃</span>
        <HumidityIcon />
        <span className="ml-1.5 w-[74px]">50%</span>
        <div className="flex items-center gap-[31px]">
          <button type="button" aria-label="Температура"><ThermoIcon /></button>
          <button type="button" aria-label="Руль"><WheelIcon /></button>
          <button type="button" aria-label="Wi-Fi"><WifiIcon /></button>
          <button type="button" aria-label="Местоположение"><PlaceIcon /></button>
          <button type="button" aria-label="Настройки"><HexGearIcon /></button>
        </div>
      </div>
    </header>
  );
}

function NavigationCard() {
  return (
    <section className="rounded-xl bg-[#a8a8a8] px-5 pt-3 pb-[23px]">
      <h2 className="text-[22px] leading-7 text-[#464646]">Карта навигации</h2>
      <div className="mt-[25px] flex items-start justify-between pr-[50px] pl-[43px]">
        <div>
          <p className="text-[80px] leading-[62px] text-[#222]">0</p>
          <p className="mt-[7px] pl-1.5 text-xl leading-5 text-[#484848]">KM/H</p>
        </div>
        <svg viewBox="0 0 78 70" className="h-[70px] w-[78px]" aria-hidden="true">
          <path d="M12 50Q14 48 16 48H59Q61 48 63 50L77 67Q78 70 75 70H3Q0 70 1 67Z" fill="#92939c" />
          <path d="M38 60 20 28A20 20 0 1 1 56 28Z" fill="#987083" />
          <circle cx="38" cy="20" r="6" fill="#a8a8a8" />
        </svg>
      </div>
      <div className="mt-[30px] flex h-10 items-center justify-between pr-[45px] pl-12 text-[#4d4d4d]">
        <button type="button" aria-label="Обои">
          <Line box="0 0 40 34" w={2.6} className="h-[34px] w-10">
            <rect x="1.500" y="1.500" width="37" height="31" rx="7" />
            <path d="M3 29 11 17Q14 12 17 16L24 27 28 22Q30 20 32 22L37 27" />
            <circle cx="28" cy="11" r="3" fill="currentColor" stroke="none" />
          </Line>
        </button>
        <span className="h-6 w-0.5 bg-[#969696]" />
        <button type="button" aria-label="Автомобиль">
          <Line box="0 0 38 34" w={2.6} className="h-[34px] w-[38px]">
            <path d="M5 11 11 3H27L33 11M2 14V31H8L11 26H27L30 31H36V14L28 18M2 14 10 18" />
          </Line>
        </button>
        <span className="h-6 w-0.5 bg-[#969696]" />
        <button type="button" aria-label="Навигация" className="text-[#111]">
          <Line box="0 0 44 36" w={2.6} className="h-9 w-11">
            <path d="M22 27Q12 17 12 11A10 10 0 0 1 32 11Q32 17 22 27ZM11 22 2 30Q1 34 5 34H39Q43 34 42 30L33 22" />
            <circle cx="22" cy="12" r="2.800" fill="currentColor" stroke="none" />
          </Line>
        </button>
      </div>
    </section>
  );
}

function MusicCard() {
  return (
    <section className="mt-[13px] h-[247px] shrink-0 rounded-xl bg-linear-to-r from-[#a9a9a9] to-[#a4a4a4] px-5 pt-4">
      <h2 className="text-[22px] leading-7 text-[#464646]">Музыка</h2>
      <div className="mt-6 flex items-start justify-between pr-[39px] pl-[27px]">
        <div className="pt-[3px]">
          <p className="text-[28px] leading-9 text-[#1e1e1e]">FM 87,8</p>
          <p className="mt-1 text-[25px] leading-9 text-[#4a4a4a]">Местное FM</p>
        </div>
        <svg viewBox="0 0 74 74" className="h-[74px] w-[74px]" aria-hidden="true">
          <circle cx="37" cy="37" r="36" fill="#333" stroke="#97979b" strokeWidth="1" />
          <path d="M2 38 37 37 2 43ZM72 35 37 37 72 40Z" fill="#4d4d4d" />
          <circle cx="37" cy="37" r="14" fill="#3f5a42" />
          <circle cx="37" cy="37" r="9.500" fill="#a3a6ad" stroke="#578a58" strokeWidth="5" />
        </svg>
      </div>
    </section>
  );
}

function MapWidget() {
  return (
    <section className="relative min-w-0 flex-1 overflow-hidden rounded-t-[22px]">
      <CityMap />
      <div className="absolute top-[90px] right-36 flex h-[72px] w-[146px] items-center justify-between rounded-[36px] bg-[#a9a9ac]/70 pr-[15px] pl-[11px]">
        <svg viewBox="0 0 46 46" className="h-[46px] w-[46px]" aria-hidden="true">
          <path d="M0 19C0 8 7 1 16 1H26C36 1 45 10 45 24Z" fill="#2b2b22" />
          <path d="M2 24C2 12 8 4 18 4 30 4 32 22 45 24A21.500 21.500 0 1 1 2 24Z" fill="#9a8018" />
        </svg>
        <span className="h-12 w-0.5 bg-[#949494]" />
        <span className="flex h-[43px] w-[43px] items-center justify-center rounded-full border-3 border-[#2b2b2b] text-[28px] leading-none font-medium text-[#2b2b2b]">P</span>
      </div>
      <div className="absolute top-[66px] right-1.5 bottom-0 flex w-[120px] flex-col items-center rounded-t-xl bg-[#a9a9a9] pt-[73px] text-[#2d2d2d] shadow-md">
        <button type="button" aria-label="Приложения">
          <svg viewBox="0 0 40 42" className="h-[42px] w-10" aria-hidden="true">
            <g fill="none" stroke="currentColor" strokeWidth="5" strokeLinejoin="round">
              <rect x="4.500" y="5.500" width="11" height="12" />
              <rect x="24.500" y="5.500" width="11" height="12" />
              <rect x="4.500" y="25.500" width="11" height="12" />
              <rect x="24.500" y="25.500" width="11" height="12" />
            </g>
            <circle cx="34" cy="7" r="7" fill="#06a506" />
          </svg>
        </button>
        <button type="button" aria-label="Закладки" className="mt-[149px]">
          <svg viewBox="0 0 36 44" className="h-11 w-9" fill="none" stroke="currentColor" strokeWidth="4" aria-hidden="true">
            <path d="M3 11H25V39L14 34 3 39ZM9 3H33V36" />
          </svg>
        </button>
      </div>
    </section>
  );
}

/* ---------- app drawer ---------- */

const RECENT = [
  { name: 'Темы', Icon: ShirtIcon },
  { name: 'Файлы', Icon: FolderIcon },
  { name: 'Навигатор', Icon: ArrowIcon },
  { name: 'SSR', Icon: PlaneIcon },
];

const APPS = [
  { name: 'Опции', Icon: GearIcon },
  { name: 'Перезагрузка ГУ', Icon: PowerIcon },
  { name: 'Темы', Icon: ShirtIcon, marked: true },
  { name: 'Звук', Icon: SoundIcon },
  { name: 'Инструменты', Icon: GaugeIcon },
  { name: 'Профиль', Icon: ProfileIcon },
  { name: 'Обои', Icon: PaletteIcon },
  { name: 'День/ночь', Icon: DayNightIcon },
  { name: 'обновление системы', Icon: OtaIcon },
  { name: 'Радио', Icon: RadioIcon },
  { name: 'ВТ Муз.', Icon: BluetoothIcon },
  { name: 'Магаз прил.', Icon: ShopIcon },
  { name: 'Авто.инф.', Icon: FanIcon },
  { name: 'Навигатор', Icon: ArrowIcon },
  { name: 'SSRR', Icon: PlaneIcon },
  { name: 'SSR', Icon: PlaneIcon },
  { name: 'Музыка', Icon: MusicIcon },
  { name: 'Файлы', Icon: FolderIcon },
];

function AppDrawer() {
  return (
    <main className="flex shrink-0 bg-[#fefefe] text-[26px] leading-[30px] text-[#333]">
      <aside className="flex w-64 flex-col items-center pt-7">
        <div className="flex flex-col gap-[39px]">
          {RECENT.map(({ name, Icon }) => (
            <button key={name} type="button" aria-label={name} className="h-[101px] w-[101px]">
              <Icon />
            </button>
          ))}
        </div>
        <p className="mt-6">Недавние</p>
      </aside>
      <div className="my-[55px] -mr-0.5 w-0.5 bg-[#f4f4f5]" />
      <div className="flex flex-1 flex-col items-center pt-[35px] pb-2.5">
        <div className="grid w-full grid-cols-6 gap-y-[55px]">
          {APPS.map(({ name, Icon, marked }) => (
            <button key={name} type="button" className="relative flex flex-col items-center whitespace-nowrap">
              <span className="h-[101px] w-[101px]">
                <Icon />
              </span>
              <span className="mt-[13px]">{name}</span>
              {marked && <span className="absolute -top-3 -bottom-[5px] left-1/2 ml-[-85px] w-[175px] border-5 border-[#ed1c24]" />}
            </button>
          ))}
        </div>
        <div className="mt-[38px] flex gap-2">
          <span className="h-[18px] w-2.5 rounded-full bg-[#6a8cc0]" />
          <span className="h-[18px] w-2.5 rounded-full bg-[#eaeaea]" />
        </div>
      </div>
    </main>
  );
}

/* ---------- dock ---------- */

const DOCK = [
  { name: 'Навигатор', Icon: ArrowIcon },
  { name: 'Приложения', Icon: CirclesIcon },
  { name: 'Эквалайзер', Icon: SlidersIcon },
  { name: 'Google Maps', Icon: MapsPinIcon },
  { name: 'Netflix', Icon: NetflixIcon },
  { name: 'Добавить', Icon: AddIcon },
];

function AlbumIcon() {
  return (
    <svg viewBox="0 0 70 70" className="h-[70px] w-[70px]" aria-hidden="true">
      <linearGradient id="album-note" x1="0" y1="0" x2="0" y2="1">
        <stop offset="0" stopColor="#b3c0e3" />
        <stop offset="1" stopColor="#7b9bcb" />
      </linearGradient>
      <rect x="1" y="1" width="68" height="68" rx="8" fill="#f8fafd" stroke="#e2d7d9" strokeWidth="2" />
      <path d="M25 21 52 16V45A6 6 0 1 1 48 41V28L28 31V51A6 6 0 1 1 25 46Z" fill="url(#album-note)" />
    </svg>
  );
}

function Dock() {
  return (
    <footer className="flex h-[97px] shrink-0 border-t border-[#ececec] bg-[#fefefe]">
      <div className="flex w-[43%] items-center bg-[#fcfcfc] pl-[53px] text-[#444]">
        <button type="button" aria-label="Свернуть">
          <Line box="0 0 40 40" w={2.2} className="h-10 w-10">
            <path d="M20 4V15M2 16 20 34 38 16" />
          </Line>
        </button>
        <button type="button" aria-label="Назад" className="ml-[68px]">
          <Line box="0 0 40 40" w={2.2} className="h-10 w-10">
            <path d="M28 4 12 20 28 36" />
          </Line>
        </button>
        <button type="button" aria-label="Домой" className="ml-[68px]">
          <Line box="0 0 40 40" w={2.4} className="h-10 w-10">
            <circle cx="20" cy="20" r="16" />
          </Line>
        </button>
        <div className="ml-[72px]">
          <AlbumIcon />
        </div>
        <div className="ml-[29px] flex-1 pb-0.5 text-[27px] leading-8">
          <p className="text-[#2e2e2e]">Ожид.воспроизв.</p>
          <p className="text-[#999]">Исполнитель</p>
        </div>
        <button type="button" aria-label="Воспроизвести" className="mr-[59px]">
          <Line box="0 0 40 40" w={2.2} className="h-10 w-10">
            <path d="M8 6Q8 4 10 5L32 19Q33 20 32 21L10 35Q8 36 8 34Z" />
          </Line>
        </button>
      </div>
      <nav className="flex flex-1 items-center justify-between pr-[55px] pl-[52px]">
        {DOCK.map(({ name, Icon }) => (
          <button key={name} type="button" aria-label={name} className="h-[62px] w-[62px]">
            <Icon />
          </button>
        ))}
      </nav>
      <div className="my-[14px] w-0.5 bg-[#efefef]" />
      <div className="flex items-center pr-10 pl-9 text-[#333]">
        <Line box="0 0 34 34" w={2} className="h-[34px] w-[34px]">
          <path d="M17 32H6Q2 32 2 28V6Q2 2 6 2H20Q24 2 24 6V10M11 7H14" />
          <rect x="20" y="15" width="12" height="17" rx="3" />
          <path d="M24 12H28" />
          <rect x="22.500" y="18" width="7" height="11" fill="#67c47c" stroke="none" />
        </Line>
        <Line box="0 0 42 34" w={2.4} className="ml-[30px] h-[34px] w-[42px]">
          <path d="M2 12Q21 -5 40 12M7 18Q21 6 35 18M13 23Q21 17 29 23" />
          <circle cx="21" cy="29.500" r="2.400" fill="currentColor" stroke="none" />
        </Line>
        <time className="ml-[22px] text-[46px] leading-none text-black">14:03</time>
      </div>
    </footer>
  );
}

export default function App() {
  return (
    <div className="flex h-screen flex-col overflow-hidden bg-[#989ba0] font-['Roboto','Noto_Sans',sans-serif]">
      <div className="flex min-h-0 flex-1 flex-col overflow-hidden">
        <StatusBar />
        <div className="flex min-h-0 flex-1 gap-[13px] px-[13px]">
          <div className="flex w-[437px] shrink-0 flex-col overflow-hidden">
            <NavigationCard />
            <MusicCard />
          </div>
          <MapWidget />
        </div>
      </div>
      <AppDrawer />
      <Dock />
    </div>
  );
}
